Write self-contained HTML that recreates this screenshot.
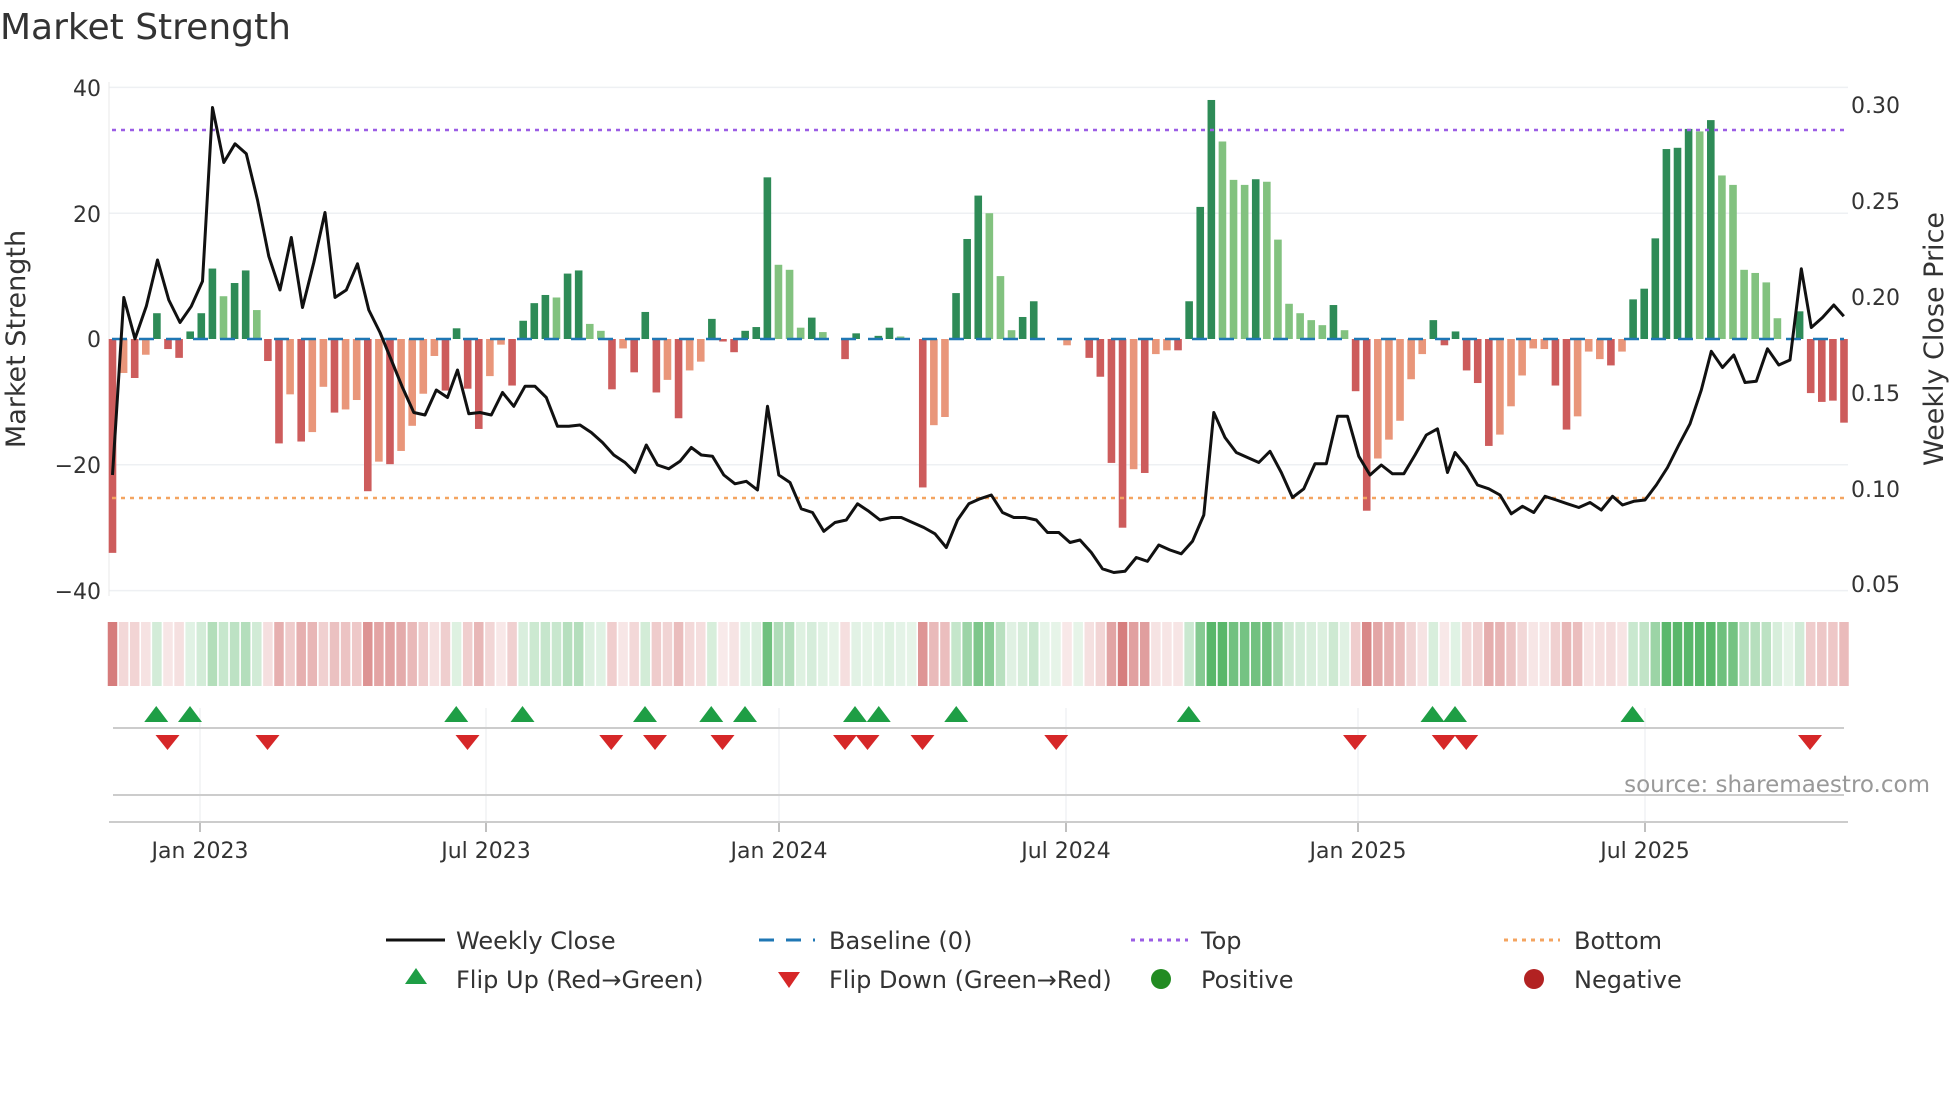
<!DOCTYPE html>
<html><head><meta charset="utf-8"><style>
html,body{margin:0;padding:0;background:#fff;width:1960px;height:1102px;overflow:hidden}
svg{display:block;font-family:"DejaVu Sans","Liberation Sans",sans-serif}
</style></head><body>
<svg id="s" width="1960" height="1102" viewBox="0 0 1960 1102" xmlns="http://www.w3.org/2000/svg">
<text x="0" y="39" font-size="36" fill="#333">Market Strength</text>
<g id="grid"></g>
<g id="bars"></g>
<g id="heat"></g>
<g id="tri"></g>
<g font-size="22" fill="#333">
<text x="101" y="96" text-anchor="end">40</text>
<text x="101" y="222" text-anchor="end">20</text>
<text x="101" y="347" text-anchor="end">0</text>
<text x="101" y="473" text-anchor="end">−20</text>
<text x="101" y="599" text-anchor="end">−40</text>
<text x="1851" y="113">0.30</text>
<text x="1851" y="209">0.25</text>
<text x="1851" y="305">0.20</text>
<text x="1851" y="401">0.15</text>
<text x="1851" y="497">0.10</text>
<text x="1851" y="592">0.05</text>
<text x="200" y="858" text-anchor="middle">Jan 2023</text>
<text x="486" y="858" text-anchor="middle">Jul 2023</text>
<text x="779" y="858" text-anchor="middle">Jan 2024</text>
<text x="1066" y="858" text-anchor="middle">Jul 2024</text>
<text x="1358" y="858" text-anchor="middle">Jan 2025</text>
<text x="1645" y="858" text-anchor="middle">Jul 2025</text>
</g>
<text transform="translate(25,339) rotate(-90)" text-anchor="middle" font-size="27" fill="#333">Market Strength</text>
<text transform="translate(1943,339) rotate(-90)" text-anchor="middle" font-size="27" fill="#333">Weekly Close Price</text>
<text x="1930" y="792" text-anchor="end" font-size="23" fill="#999">source: sharemaestro.com</text>
<g font-size="24" fill="#333">
<line x1="386" y1="940" x2="445" y2="940" stroke="#111" stroke-width="3"/>
<text x="456" y="949">Weekly Close</text>
<line x1="759" y1="940" x2="815" y2="940" stroke="#1f77b4" stroke-width="3" stroke-dasharray="15,12"/>
<text x="829" y="949">Baseline (0)</text>
<line x1="1131" y1="940" x2="1188" y2="940" stroke="#9b5de5" stroke-width="3" stroke-dasharray="4,5"/>
<text x="1201" y="949">Top</text>
<line x1="1504" y1="940" x2="1560" y2="940" stroke="#f4a460" stroke-width="3" stroke-dasharray="4,5"/>
<text x="1574" y="949">Bottom</text>
<polygon points="416,968 405,984 427,984" fill="#1e9e45"/>
<text x="456" y="988">Flip Up (Red→Green)</text>
<polygon points="789,988 778,972 800,972" fill="#d62728"/>
<text x="829" y="988">Flip Down (Green→Red)</text>
<circle cx="1161" cy="979" r="10" fill="#228b22"/>
<text x="1201" y="988">Positive</text>
<circle cx="1534" cy="979" r="10" fill="#b22222"/>
<text x="1574" y="988">Negative</text>
</g>
</svg>
<script>
var NS="http://www.w3.org/2000/svg";
function el(p,t,a){var e=document.createElementNS(NS,t);for(var k in a)e.setAttribute(k,a[k]);document.getElementById(p).appendChild(e);return e;}
var V=[[-34,0],[-5.4,1],[-6.2,0],[-2.5,1],[4.1,0],[-1.6,0],[-3,0],[1.2,0],[4.1,0],[11.2,0],[6.8,1],[8.9,0],[10.9,0],[4.6,1],[-3.5,0],[-16.6,0],[-8.8,1],[-16.3,0],[-14.8,1],[-7.6,1],[-11.7,0],[-11.2,1],[-9.7,1],[-24.2,0],[-19.5,1],[-19.9,0],[-17.8,1],[-13.8,1],[-8.7,1],[-2.7,1],[-8.2,0],[1.7,0],[-7.9,0],[-14.3,0],[-5.9,1],[-0.9,1],[-7.4,0],[2.9,0],[5.7,0],[7,0],[6.6,1],[10.4,0],[10.9,0],[2.4,1],[1.3,1],[-8,0],[-1.5,1],[-5.3,0],[4.3,0],[-8.5,0],[-6.5,1],[-12.6,0],[-5,1],[-3.6,1],[3.2,0],[-0.4,0],[-2.1,0],[1.3,0],[1.9,0],[25.7,0],[11.8,1],[11,1],[1.8,1],[3.4,0],[1.1,1],[0,0],[-3.2,0],[0.9,0],[0,0],[0.5,0],[1.8,0],[0.4,1],[0,0],[-23.6,0],[-13.7,1],[-12.4,1],[7.3,0],[15.9,0],[22.8,0],
[20,1],[10,1],[1.4,1],[3.5,0],[6,0],[0,0],[0,0],[-1,1],[0,0],[-3,0],[-6,0],[-19.7,0],[-30,0],[-20.7,1],[-21.3,0],[-2.4,1],[-1.8,1],[-1.8,0],
[6,0],[21,0],[38,0],[31.4,1],[25.3,1],[24.5,1],[25.4,0],[25,1],[15.8,1],[5.6,1],[4.1,1],[3,1],[2.2,1],[5.4,0],[1.4,1],
[-8.3,0],[-27.3,0],[-19,1],[-16,1],[-13,1],[-6.4,1],[-2.4,1],[3,0],[-1,0],[1.2,0],[-5,0],[-7,0],[-17,0],[-15.2,1],[-10.7,1],[-5.8,1],[-1.5,1],[-1.6,1],[-7.4,0],[-14.4,0],[-12.3,1],[-2,1],[-3.2,1],[-4.2,0],[-2,1],
[6.3,0],[8,0],[16,0],[30.2,0],[30.4,0],[33.4,0],[33,1],[34.8,0],[26,1],[24.5,1],[11,1],[10.5,1],[9,1],[3.3,1],[0,0],[4.4,0],
[-8.6,0],[-10,0],[-9.8,0],[-13.3,0]];
var N=V.length,x0=112.5,x1=1844,dx=(x1-x0)/(N-1),y0=339,u=6.29;
[40,20,-20,-40].forEach(function(v){el("grid","line",{x1:109,x2:1848,y1:y0-v*u,y2:y0-v*u,stroke:"#eef0f3","stroke-width":1.5});});
el("grid","line",{x1:109,x2:109,y1:82,y2:596,stroke:"#e8e8e8","stroke-width":1});
[200,486,779,1066,1358,1645].forEach(function(x){el("grid","line",{x1:x,x2:x,y1:708,y2:822,stroke:"#eceef1","stroke-width":1.2});el("grid","line",{x1:x,x2:x,y1:822,y2:832,stroke:"#aaa","stroke-width":1.5});});
el("grid","line",{x1:113,x2:1844,y1:728,y2:728,stroke:"#ccc","stroke-width":2});
el("grid","line",{x1:113,x2:1844,y1:795,y2:795,stroke:"#ccc","stroke-width":2});
el("grid","line",{x1:109,x2:1848,y1:822,y2:822,stroke:"#ccc","stroke-width":2});
V.forEach(function(d,i){var v=d[0],x=x0+i*dx,h=Math.abs(v)*u;var c=v>=0?(d[1]?"#82c27f":"#2e8b57"):(d[1]?"#e9967a":"#cd5c5c");
if(h>0.3)el("bars","rect",{x:x-3.8,y:v>=0?y0-h:y0,width:7.6,height:h,fill:c});
var a=Math.min(1,0.15+Math.abs(v)/36);var hc=v>=0?"rgba(60,170,80,"+(a*0.85)+")":"rgba(200,80,80,"+(a*0.75)+")";
el("heat","rect",{x:x-dx/2+0.8,y:622,width:dx-1.6,height:64,fill:hc});});
el("bars","line",{x1:112,x2:1844,y1:y0,y2:y0,stroke:"#1f77b4","stroke-width":2.5,"stroke-dasharray":"15,12"});
el("bars","line",{x1:112,x2:1844,y1:130,y2:130,stroke:"#9b5de5","stroke-width":2.5,"stroke-dasharray":"4,5"});
el("bars","line",{x1:112,x2:1844,y1:498,y2:498,stroke:"#f4a460","stroke-width":2.5,"stroke-dasharray":"4,5"});
var P=[90,380,99,238,108,271,117,245,126,208,135,240,144,258,153,245,162,225,170,86,179,130,188,115,197,123,206,160,215,205,224,232,233,190,242,246,251,210,260,170,268,238,277,232,286,211,295,248,304,266,313,288,322,310,331,330,340,332,349,312,358,318,366,296,375,331,384,330,393,332,402,314,411,325,420,309,428,309,437,318,446,341,455,341,464,340,473,346,482,354,491,364,500,370,508,378,517,356,526,372,535,375,544,369,553,358,561,364,570,365,579,380,588,387,597,385,606,392,614,325,623,380,632,386,641,407,650,410,659,425,668,418,677,416,686,403,695,409,704,416,713,414,721,414,730,418,739,422,748,427,757,438,766,416,775,403,784,399,793,396,802,410,811,414,820,414,829,416,838,426,847,426,856,434,864,432,873,442,882,455,891,458,900,457,909,446,918,449,927,436,936,440,945,443,954,433,963,412,971,330,980,350,989,362,998,366,1007,370,1016,361,1025,378,1034,398,1043,391,1052,371,1061,371,1070,333,1078,333,1087,365,1096,380,1105,372,1114,379,1123,379,1132,364,1141,348,1150,343,1158,378,1164,362,1173,373,1182,388,1191,391,1200,396,1209,411,1218,405,1227,410,1236,397,1245,400,1254,403,1263,406,1272,402,1281,408,1290,397,1298,404,1307,401,1316,400,1325,388,1334,374,1343,356,1352,339,1361,312,1369,281,1378,294,1387,284,1396,306,1405,305,1414,279,1423,292,1432,288,1441,215,1449,262,1458,254,1467,244,1475,253];
var pts=[];for(var i=0;i<P.length;i+=2)pts.push((P[i]*1.25).toFixed(1)+","+(P[i+1]*1.25).toFixed(1));
el("bars","polyline",{points:pts.join(" "),fill:"none",stroke:"#111","stroke-width":3,"stroke-linejoin":"round"});
[125,152,365,418,516,569,596,684,703,765,951,1146,1164,1306].forEach(function(x){x*=1.25;el("tri","polygon",{points:x+",706 "+(x-12)+",722 "+(x+12)+",722",fill:"#1e9e45"});});
[134,214,374,489,524,578,676,694,738,845,1084,1155,1173,1448].forEach(function(x){x*=1.25;el("tri","polygon",{points:(x-12)+",735 "+(x+12)+",735 "+x+",750",fill:"#d62728"});});
</script>
</body></html>
